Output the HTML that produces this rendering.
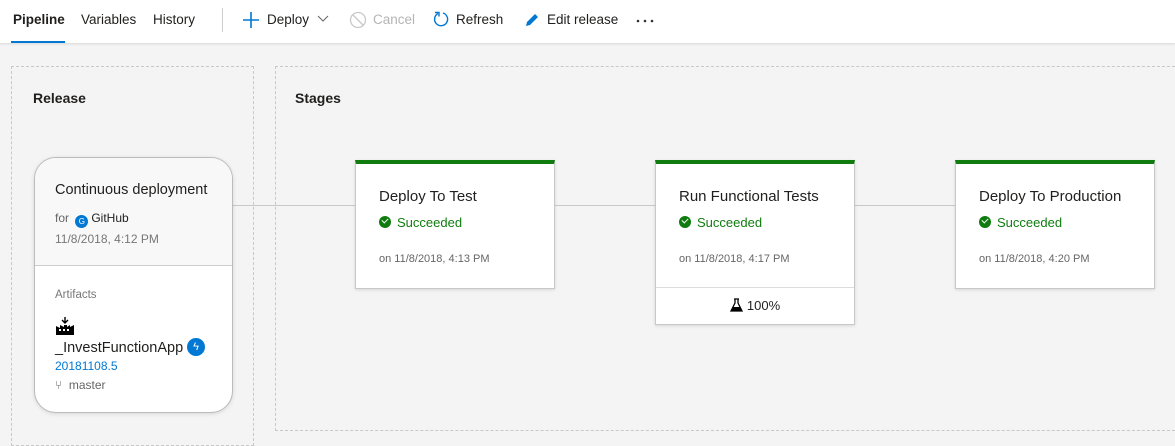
<!DOCTYPE html>
<html><head><meta charset="utf-8"><style>
*{box-sizing:border-box;margin:0;padding:0}
body{width:1175px;height:439px;overflow:hidden;background:#f4f4f4;font-family:"Liberation Sans",sans-serif;color:#201f1e;position:relative}
.tb{position:absolute;left:0;top:0;width:1175px;height:44px;background:#fff;border-bottom:1px solid #e1e1e1;box-shadow:0 1px 2px rgba(0,0,0,.06)}
.tb span{position:absolute;top:12px;font-size:13.5px}
.ul{position:absolute;left:11px;top:41px;width:54px;height:2px;background:#0078d4}
.dash{position:absolute;border:1px dashed #c8c8c8}
.h{position:absolute;font-size:14px;font-weight:bold}
.line{position:absolute;height:1px;background:#c8c8c8;top:205px}
.card{position:absolute;background:#fff;border:1px solid #c8c8c8;border-top:4px solid #107c10;box-shadow:0 1px 3px rgba(0,0,0,.12)}
.card .t{position:absolute;left:23px;top:24px;font-size:15px}
.card .s{position:absolute;left:23px;top:51px;font-size:13px;color:#107c10}
.card .s i{display:inline-block;width:12px;height:12px;border-radius:50%;background:#107c10;vertical-align:-1px;margin-right:6px;position:relative}
.card .s i:after{content:"";position:absolute;left:3px;top:2px;width:5px;height:3px;border-left:1.5px solid #fff;border-bottom:1.5px solid #fff;transform:rotate(-45deg)}
.card .d{position:absolute;left:23px;top:89px;font-size:11px;color:#666}
.rel{position:absolute;left:34px;top:157px;width:199px;height:256px;border:1px solid #bbb;border-radius:22px;background:#fff;overflow:hidden;box-shadow:0 1px 4px rgba(0,0,0,.12)}
</style></head><body>
<div class="tb">
<span style="left:13px;font-weight:bold">Pipeline</span>
<span style="left:81px">Variables</span>
<span style="left:153px">History</span>
<div style="position:absolute;left:222px;top:8px;width:1px;height:24px;background:#ccc"></div>
<svg style="position:absolute;left:242px;top:11px" width="18" height="18"><path d="M9 1v16M1 9h16" stroke="#0078d4" stroke-width="1.6"/></svg>
<span style="left:267px">Deploy</span>
<svg style="position:absolute;left:317px;top:15px" width="12" height="8"><path d="M1 1l5 5 5-5" stroke="#666" fill="none"/></svg>
<svg style="position:absolute;left:349px;top:11px" width="18" height="18"><circle cx="9" cy="9" r="7.5" stroke="#c8c8c8" fill="none" stroke-width="1.3"/><path d="M4 4l10 10" stroke="#c8c8c8" stroke-width="1.3"/></svg>
<span style="left:373px;color:#b5b5b5">Cancel</span>
<svg style="position:absolute;left:432px;top:10px" width="18" height="18"><path d="M6 3.5A6.5 6.5 0 1 0 11 3" stroke="#0078d4" fill="none" stroke-width="1.4"/><path d="M3 2.5h4v4" stroke="#0078d4" fill="none" stroke-width="1.4"/></svg>
<span style="left:456px">Refresh</span>
<svg style="position:absolute;left:523px;top:11px" width="18" height="18"><path d="M3 15l1-4 8-8 3 3-8 8z" fill="#0078d4"/></svg>
<span style="left:547px">Edit release</span>
<svg style="position:absolute;left:636px;top:19px" width="20" height="4"><circle cx="2" cy="2" r="1.3" fill="#333"/><circle cx="9" cy="2" r="1.3" fill="#333"/><circle cx="16" cy="2" r="1.3" fill="#333"/></svg>
</div>
<div class="ul"></div>
<div class="dash" style="left:11px;top:66px;width:243px;height:380px"></div>
<div class="dash" style="left:275px;top:66px;width:905px;height:365px"></div>
<div class="h" style="left:33px;top:90px">Release</div>
<div class="h" style="left:295px;top:90px">Stages</div>
<div class="line" style="left:233px;width:122px"></div>
<div class="line" style="left:554px;width:101px"></div>
<div class="line" style="left:854px;width:101px"></div>
<div class="rel">
<div style="position:absolute;left:0;top:0;width:100%;height:108px;background:#f8f8f8;border-bottom:1px solid #ccc"></div>
<div style="position:absolute;left:20px;top:24px;font-size:14.5px">Continuous deployment</div>
<div style="position:absolute;left:20px;top:53px;font-size:12px;color:#666">for <span style="display:inline-block;width:13px;height:13px;border-radius:50%;background:#0078d4;color:#fff;font-size:8px;text-align:center;line-height:13px;vertical-align:-2px;margin:0 3px">G</span><span style="color:#201f1e">GitHub</span></div>
<div style="position:absolute;left:20px;top:74px;font-size:12px;color:#777">11/8/2018, 4:12 PM</div>
<div style="position:absolute;left:20px;top:131px;font-size:11.5px;color:#777">Artifacts</div>
<svg style="position:absolute;left:20px;top:158px" width="20" height="20"><path d="M10 1v6M7 4l3 3 3-3" stroke="#000" fill="none" stroke-width="1.4"/><path d="M1 19V10l4 2V9l4 2V9h3v2l3-2v2l4-2v10z" fill="#000"/><rect x="4" y="13" width="2" height="2" fill="#fff"/><rect x="8" y="13" width="2" height="2" fill="#fff"/><rect x="12" y="13" width="2" height="2" fill="#fff"/></svg>
<div style="position:absolute;left:20px;top:182px;font-size:14.5px">_InvestFunctionApp</div>
<div style="position:absolute;left:152px;top:180px;width:18px;height:18px;border-radius:50%;background:#0078d4;color:#fff;font-size:11px;text-align:center;line-height:18px">ϟ</div>
<div style="position:absolute;left:20px;top:201px;font-size:12px;color:#0078d4">20181108.5</div>
<div style="position:absolute;left:20px;top:220px;font-size:12px;color:#666">⑂ &nbsp;master</div>
</div>
<div class="card" style="left:355px;top:160px;width:200px;height:129px"><div class="t">Deploy To Test</div><div class="s"><i></i>Succeeded</div><div class="d">on 11/8/2018, 4:13 PM</div></div>
<div class="card" style="left:655px;top:160px;width:200px;height:165px"><div class="t">Run Functional Tests</div><div class="s"><i></i>Succeeded</div><div class="d">on 11/8/2018, 4:17 PM</div>
<div style="position:absolute;left:0;top:123px;width:100%;height:1px;background:#ddd"></div>
<div style="position:absolute;left:0;top:134px;width:100%;text-align:center;font-size:13px"><svg width="13" height="14" style="vertical-align:-2px;margin-right:4px"><path d="M4 1h5M5 1v4L1 13h11L8 5V1" fill="none" stroke="#000" stroke-width="1.3"/><path d="M3 9h7l2 4H1z" fill="#000"/></svg>100%</div></div>
<div class="card" style="left:955px;top:160px;width:200px;height:129px"><div class="t">Deploy To Production</div><div class="s"><i></i>Succeeded</div><div class="d">on 11/8/2018, 4:20 PM</div></div>
</body></html>
